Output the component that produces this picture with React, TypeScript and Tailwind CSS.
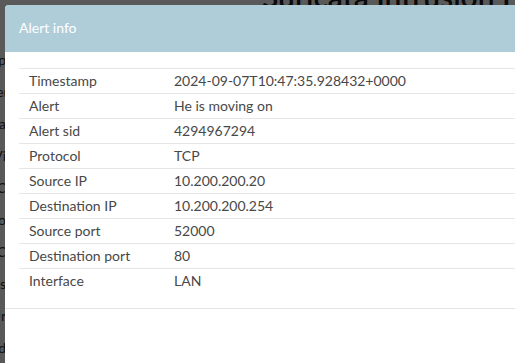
import React from "react";

const ROWS: [string, string][] = [
  ["Timestamp", "2024-09-07T10:47:35.928432+0000"],
  ["Alert", "He is moving on"],
  ["Alert sid", "4294967294"],
  ["Protocol", "TCP"],
  ["Source IP", "10.200.200.20"],
  ["Destination IP", "10.200.200.254"],
  ["Source port", "52000"],
  ["Destination port", "80"],
  ["Interface", "LAN"],
];

const SIDE = ["Ap", "Ger", "Fa", "Vi", "AC", "Po", "IC", "rls", "Ur", "ad", "sc"];

export default function App() {
  return (
    <div className="relative h-[363px] w-[515px] overflow-hidden bg-white font-['Lato','Noto_Sans',sans-serif]">
      {/* page behind the dialog */}
      <div className="flex flex-col">
        <div className="mt-[-26px] pl-[262px] text-[30px] font-semibold whitespace-nowrap text-[#222]">
          Suricata Intrusion Detection Rules
        </div>
        <div className="ml-[-14px] mt-[30px] flex flex-col gap-[11px] text-[14px] text-[#333]">
          {SIDE.map((s) => (
            <span key={s} className="w-[20px] text-right">
              {s}
            </span>
          ))}
        </div>
      </div>

      {/* backdrop */}
      <div className="absolute inset-0 bg-black/65" />

      {/* dialog */}
      <div className="absolute left-[5px] top-[5px] w-[620px] overflow-hidden rounded-tl-[4px] bg-white">
        <div className="flex h-[47px] items-center bg-[#afcdd9] px-[14px] pb-[3px]">
          <h4 className="text-[14px] text-white">Alert info</h4>
        </div>

        <div className="px-[14px] pt-[16px] pb-[14px]">
          <table className="w-full border-collapse text-[14px] text-[#484848]">
            <tbody>
              {ROWS.map(([k, v]) => (
                <tr key={k} className="h-[25px] border-t border-[#e6e6e6]">
                  <td className="w-[155px] px-[10px] leading-[24px]">{k}</td>
                  <td className="px-0 leading-[24px]">{v}</td>
                </tr>
              ))}
            </tbody>
          </table>
        </div>

        <div className="h-[70px] border-t border-[#e3e3e3]" />
      </div>
    </div>
  );
}
